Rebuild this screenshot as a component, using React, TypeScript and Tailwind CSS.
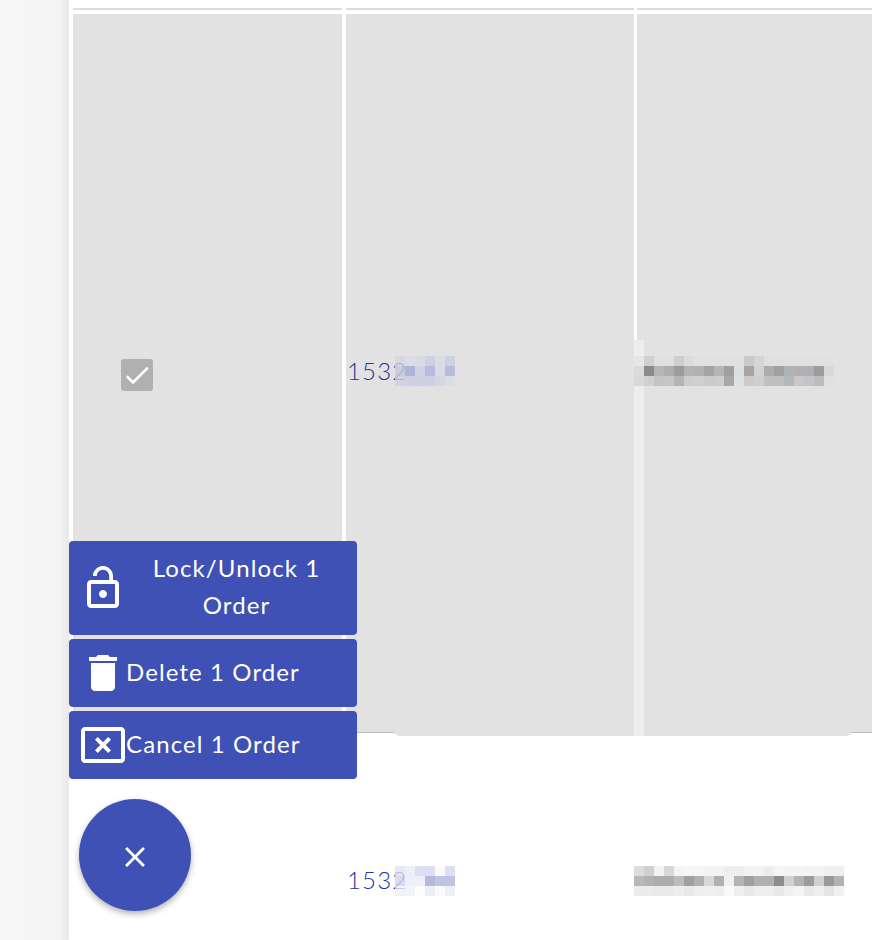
import type { ReactNode } from 'react';

const idBlurSelected = [
  ['#d5d6e2cc', '#dcdde3', '#d9dae4', '#cfd1e2', '#dcdde3', '#cdd0e3'],
  ['#c4c8decc', '#b0b5d8', '#cfd2e3', '#b8bcdc', '#d8dae5', '#b8bcdc'],
  ['#cdd0e0cc', '#cfd1e0', '#cdd0e0', '#cfd1e0', '#d5d6e2', '#dcdde3'],
];

const idBlurPlain = [
  ['#dfe1efcc', '#eff0f7', '#dde0f0', '#dde0f0', '#fafafc', '#dde0f0'],
  ['#d0d3eacc', '#eeeff8', '#eeeff8', '#b5b9dc', '#c0c4e2', '#c0c4e2'],
  ['#eef0f8cc', '#f2f3f8', '#fdfdfd', '#eceef5', '#fafafa', '#eeeff5'],
];

const nameBlurSelected = [
  ['#e6e6e6', '#d0d0d0', '#e0e0e0', '#e0e0e0', '#cfcdcd', '#dcdcdc', '#e0e0e0', '#e0e0e0', '#e0e0e0', '#e0e0e0', '#e0e0e0', '#c9c9c9', '#d5d5d5', '#e0e0e0', '#e0e0e0', '#e0e0e0', '#e0e0e0', '#e0e0e0', '#e0e0e0', '#e0e0e0'],
  ['#dcdad8', '#888b8e', '#b5b5b5', '#aeaeac', '#9b9b9e', '#b3b3b5', '#b1b0ae', '#a3a3a3', '#b5b6b9', '#a0a0a0', '#dde0e2', '#a8a5a3', '#d2d2d2', '#acacac', '#a0a0a0', '#b0b4b8', '#b3b0ae', '#b0b0b4', '#9c9c9c', '#d8d8dc'],
  ['#d8d8d8', '#d0d0d0', '#c4c4c4', '#c6c6c4', '#b4b4b6', '#cdcdcf', '#cfcfcd', '#cbcbcb', '#cdcdcd', '#a8a8a8', '#e0e0e0', '#ccc9c9', '#cfcfcf', '#c0c0c0', '#c0c0c0', '#b4b8bb', '#c8c8c8', '#c4c4c8', '#bcbcbc', '#e0e0e2'],
];

const nameBlurPlain = [
  ['#dcdcdc', '#d0d0d0', '#f3f3f3', '#d8d8d8', '#f4f4f4', '#f6f6f6', '#f6f6f6', '#f3f3f3', '#f3f3f3', '#eeeeee', '#eeeeee', '#f3f3f3', '#f3f3f3', '#eeeeee', '#f6f6f6', '#f3f3f3', '#f5f5f5', '#f3f3f3', '#f3f3f3', '#f0f0f0', '#eeeeee'],
  ['#b8b8b8', '#b2b2b2', '#adadad', '#adadad', '#bcbcbc', '#a0a0a0', '#b0b0b0', '#d8d8d8', '#b0b0b0', '#f0f0f0', '#b4b4b4', '#a0a0a0', '#b0b0b0', '#b0b0b0', '#8c8c8c', '#d0d0d0', '#b4b4b4', '#9c9c9c', '#d0d0cc', '#999999', '#b0b4b4'],
  ['#ececec', '#ececec', '#eaeaea', '#eaeaea', '#eeeeee', '#e8e8e8', '#eeeeee', '#f0f0f0', '#eeeeee', '#fafafa', '#eeeeee', '#e8e8e8', '#eeeeee', '#eeeeee', '#e8e8e8', '#f0f0f0', '#f4f4f4', '#e8e8e8', '#eeeeee', '#e4e4e4', '#f0f0f0'],
];

// pixelated patch that hides customer data in the screenshot
function Pixels({ rows }: { rows: string[][] }) {
  return (
    <div className="flex flex-col">
      {rows.map((row, y) => (
        <div key={y} className="flex">
          {row.map((color, x) => (
            <div key={x} className="h-[10px] w-[10px] shrink-0" style={{ backgroundColor: color }} />
          ))}
        </div>
      ))}
    </div>
  );
}

function LockOpenIcon() {
  return (
    <svg viewBox="0 0 24 24" className="h-12 w-12 shrink-0 fill-white">
      <path d="M12 17c1.1 0 2-.9 2-2s-.9-2-2-2-2 .9-2 2 .9 2 2 2zm6-9h-1V6c0-2.76-2.24-5-5-5S7 3.24 7 6h1.9c0-1.71 1.39-3.1 3.1-3.1 1.71 0 3.1 1.39 3.1 3.1v2H6c-1.1 0-2 .9-2 2v10c0 1.1.9 2 2 2h12c1.1 0 2-.9 2-2V10c0-1.1-.9-2-2-2zm0 12H6V10h12v10z" />
    </svg>
  );
}

function TrashIcon() {
  return (
    <svg viewBox="0 0 24 24" className="h-12 w-12 shrink-0 fill-white">
      <path d="M6 19c0 1.1.9 2 2 2h8c1.1 0 2-.9 2-2V7H6v12zM19 4h-3.5l-1-1h-5l-1 1H5v2h14V4z" />
    </svg>
  );
}

function CancelBoxIcon() {
  return (
    <svg viewBox="0 0 24 24" className="h-12 w-12 shrink-0 fill-white">
      <path d="M21 3H3c-1.1 0-2 .9-2 2v14c0 1.1.9 2 2 2h18c1.1 0 2-.9 2-2V5c0-1.1-.9-2-2-2zm0 16H3V5h18v14zM9.41 16L12 13.41 14.59 16 16 14.59 13.41 12 16 9.41 14.59 8 12 10.59 9.41 8 8 9.41 10.59 12 8 14.59z" />
    </svg>
  );
}

function ActionButton({ icon, label, className }: { icon: ReactNode; label: string; className: string }) {
  return (
    <button className={`flex w-[288px] items-center rounded bg-[#3f51b5] px-[10px] text-[24px] leading-[37px] tracking-[1.1px] text-white ${className}`}>
      {icon}
      <span className="mb-[4px] -ml-px">{label}</span>
    </button>
  );
}

function OrderId({ blur, blurClass }: { blur: string[][]; blurClass: string }) {
  return (
    <div className="relative pl-[1px] text-[24px] font-light tracking-[1.2px] text-[#25349f]">
      1532
      <div className={`absolute left-[49px] ${blurClass}`}>
        <Pixels rows={blur} />
      </div>
    </div>
  );
}

export default function App() {
  return (
    <div className="relative flex h-[940px] overflow-hidden bg-white font-['Lato',sans-serif]">
      <div className="w-[69px] shrink-0 bg-[linear-gradient(to_right,#f7f7f7,#f4f4f4_86%,#e8e8e8)]" />

      <div className="min-w-0 flex-1 pl-[4px] pt-[8px]">
        <div className="flex h-[2px]">
          <div className="w-[269px] bg-[#dcdcdc]" />
          <div className="ml-[4px] w-[288px] bg-[#dcdcdc]" />
          <div className="ml-[3px] flex-1 bg-[#dcdcdc]" />
        </div>

        <div className="relative mt-[4px] flex h-[719px] items-center">
          <div className="flex h-full w-[269px] items-center bg-[#e2e2e2] pl-[48px]">
            <div className="mt-[3px] flex h-8 w-8 items-center justify-center rounded-[3px] bg-[#b0b0b0]">
              <svg viewBox="0 0 24 24" className="h-8 w-8 fill-white">
                <path d="M9 16.17 5.53 12.7a.996.996 0 1 0-1.41 1.41l4.18 4.18c.39.39 1.02.39 1.41 0L20.29 7.71a.996.996 0 1 0-1.41-1.41z" />
              </svg>
            </div>
          </div>
          <div className="ml-[4px] flex h-full w-[288px] items-center bg-[#e2e2e2] pb-[5px]">
            <OrderId blur={idBlurSelected} blurClass="top-[3px]" />
          </div>
          <div className="ml-[3px] flex h-full flex-1 items-center bg-[#e2e2e2] pb-[5px]">
            <div className="relative z-10 -ml-[3px]">
              <Pixels rows={nameBlurSelected} />
            </div>
          </div>
          <div className="absolute bottom-0 left-[284px] right-0 h-[1px] bg-[#bdbdbd]" />
          <div className="absolute bottom-[-3px] left-[321px] h-[5px] w-[458px] rounded-b-[6px] bg-[#e2e2e2]" />
          <div className="absolute bottom-[-3px] left-[561px] top-[326px] w-[10px] bg-[#eeeeee]" />
        </div>

        <div className="mt-[3px] flex h-[288px] items-center">
          <div className="w-[269px]" />
          <div className="ml-[4px] w-[288px]">
            <OrderId blur={idBlurPlain} blurClass="top-[4px]" />
          </div>
          <div className="ml-[3px] mt-[2px] flex-1">
            <div className="-ml-[3px]">
              <Pixels rows={nameBlurPlain} />
            </div>
          </div>
        </div>
      </div>

      <div className="absolute left-[69px] top-[541px] flex flex-col items-start gap-1">
        <ActionButton icon={<LockOpenIcon />} label="Lock/Unlock 1 Order" className="h-[94px] text-center" />
        <ActionButton icon={<TrashIcon />} label="Delete 1 Order" className="h-[68px]" />
        <ActionButton icon={<CancelBoxIcon />} label="Cancel 1 Order" className="h-[68px]" />
        <button className="ml-[10px] mt-4 flex h-28 w-28 items-center justify-center rounded-full bg-[#3f51b5] text-white shadow-[0_3px_6px_rgba(0,0,0,0.3)]">
          <svg viewBox="0 0 24 24" className="mt-[4px] h-[34px] w-[34px] fill-white">
            <path d="M19 6.41 17.59 5 12 10.59 6.41 5 5 6.41 10.59 12 5 17.59 6.41 19 12 13.41 17.59 19 19 17.59 13.41 12z" />
          </svg>
        </button>
      </div>
    </div>
  );
}
